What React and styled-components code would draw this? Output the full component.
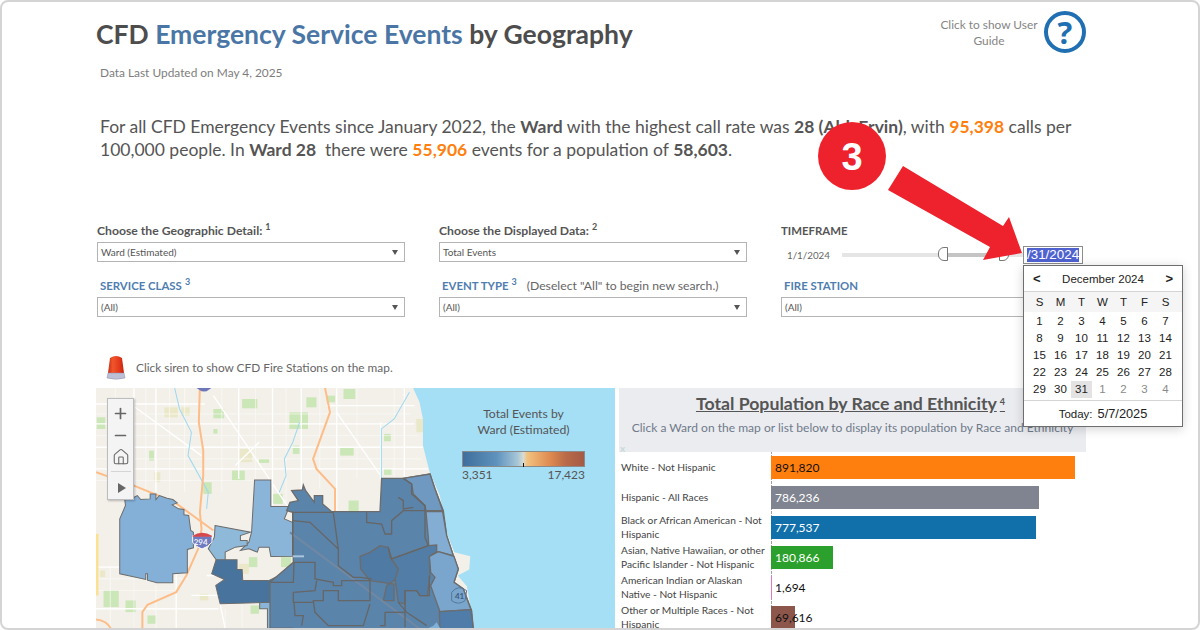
import React from 'react';
import styled, { createGlobalStyle } from 'styled-components';
import { Plus, Minus, Home } from 'lucide-react';

const GlobalStyle = createGlobalStyle`
  html, body { margin: 0; padding: 0; background: #fff; }
  * { box-sizing: border-box; }
`;

const Page = styled.div`
  position: relative;
  width: 1200px;
  height: 630px;
  overflow: hidden;
  background: #fff;
  border: 2px solid #d4d4d4;
  border-radius: 8px;
  padding: 0 112px 0 94px;
  font-family: Lato, "Open Sans", sans-serif;
  color: #555;
`;
const Header = styled.header`
  display: flex;
  justify-content: space-between;
  height: 62px;
  padding-top: 15px;
`;
const Title = styled.h1`
  margin: 0;
  font-size: 26.5px;
  line-height: 34px;
  font-weight: 700;
  color: #4d4d4d;
`;
const Blue = styled.span`
  color: #4a76a6;
`;
const Help = styled.div`
  display: flex;
  align-items: center;
  gap: 3px;
  height: 40px;
  margin-top: -5px;
`;
const HelpText = styled.div`
  width: 104px;
  padding-top: 2px;
  text-align: center;
  font-size: 11.9px;
  line-height: 16px;
  color: #858585;
`;
const HelpCircle = styled.div`
  width: 42px;
  height: 42px;
  border: 4px solid #1f6fb2;
  border-radius: 50%;
  display: flex;
  align-items: center;
  justify-content: center;
  color: #1f6fb2;
  font-family: "Open Sans", sans-serif;
  font-size: 31px;
  font-weight: 700;
`;
const Updated = styled.div`
  padding-left: 4px;
  font-size: 11.9px;
  line-height: 18px;
  color: #7d7d7d;
`;
const Summary = styled.p`
  margin: 33px 0 0 4px;
  width: 985px;
  font-size: 17.5px;
  line-height: 23px;
  color: #555;
`;
const Orange = styled.b`
  color: #ff7f0e;
`;
const Filters = styled.div`
  display: grid;
  grid-template-columns: 308px 308px 305px;
  column-gap: 34px;
  row-gap: 16px;
  margin: 62px 0 0 1px;
`;
const Filter = styled.div`
  display: flex;
  flex-direction: column;
`;
const FilterLabel = styled.div`
  height: 19px;
  line-height: 15px;
  padding-left: ${({ $inset }) => ($inset ? '3px' : '0')};
  font-size: ${({ $caps }) => ($caps ? '11.4px' : '12.2px')};
  font-weight: 700;
  color: ${({ $blue }) => ($blue ? '#4f7db0' : '#555')};
  white-space: nowrap;
`;
const Sup = styled.sup`
  font-size: 9px;
  line-height: 0;
  margin-left: 3px;
  vertical-align: 5px;
`;
const Note = styled.span`
  margin-left: 10px;
  font-size: 12.2px;
  font-weight: 400;
  color: #666;
`;
const Select = styled.div`
  position: relative;
  height: 20px;
  border: 1px solid #b4b4b4;
  padding-left: 3px;
  font-size: 10px;
  line-height: 18px;
  color: #555;
  &::after {
    content: '';
    position: absolute;
    right: 6px;
    top: 7px;
    border-left: 3.5px solid transparent;
    border-right: 3.5px solid transparent;
    border-top: 5px solid #555;
  }
`;
const SliderRow = styled.div`
  display: flex;
  align-items: center;
  height: 26px;
  margin-bottom: -6px;
`;
const SliderStart = styled.span`
  width: 61px;
  padding-left: 6px;
  font-size: 9.8px;
  color: #666;
`;
const Track = styled.div`
  position: relative;
  width: 181px;
  height: 4px;
  background: #e5e5e5;
`;
const TrackFill = styled.div`
  position: absolute;
  top: 0;
  bottom: 0;
  left: 100px;
  width: 60px;
  background: #c4c4c4;
`;
const Handle = styled.div`
  position: absolute;
  top: -6px;
  width: 10px;
  height: 14px;
  background: #fff;
  border: 1px solid #777;
  left: ${({ $right }) => ($right ? '157px' : '96px')};
  border-radius: ${({ $right }) => ($right ? '0 6px 6px 0' : '6px 0 0 6px')};
`;
const DateInput = styled.div`
  width: 60px;
  height: 18px;
  border: 1px solid #8c8c8c;
  padding: 1px 3px;
  font-family: "Liberation Sans", sans-serif;
  font-size: 13.4px;
  line-height: 14px;
  overflow: hidden;
  white-space: nowrap;
  background: #fff;
`;
const Selected = styled.span`
  display: inline-block;
  background: #4f62d0;
  color: #fff;
`;
const SirenRow = styled.div`
  display: flex;
  align-items: center;
  gap: 9px;
  height: 26px;
  margin: 37px 0 8px 9px;
  font-size: 11.85px;
  color: #666;
`;
const Board = styled.div`
  display: grid;
  grid-template-columns: 519px 467px;
  column-gap: 4px;
`;
const MapPane = styled.div`
  position: relative;
  height: 241px;
  overflow: hidden;
  background: #f3f0ea;
`;
const MapDrawing = styled.svg`
  display: block;
  width: 519px;
  height: 241px;
`;
const MapControls = styled.div`
  position: absolute;
  left: 11px;
  top: 10px;
  width: 27px;
  height: 102px;
  display: flex;
  flex-direction: column;
  align-items: center;
  padding-top: 4px;
  background: #f4f4f4;
  border: 1px solid #bdbdbd;
  box-shadow: 1px 1px 2px rgba(0, 0, 0, 0.25);
  color: #666;
`;
const ControlButton = styled.div`
  height: 22px;
  display: flex;
  align-items: center;
  justify-content: center;
`;
const ControlRule = styled.div`
  width: 20px;
  height: 1px;
  margin: 3px 0 5px;
  background: #d5d5d5;
`;
const PlayIcon = styled.div`
  margin-left: 2px;
  border-top: 5.5px solid transparent;
  border-bottom: 5.5px solid transparent;
  border-left: 8px solid #666;
`;
const Legend = styled.div`
  position: absolute;
  left: 366px;
  top: 18px;
  width: 123px;
  text-align: center;
  font-size: 12.2px;
  line-height: 16px;
  color: #555;
`;
const LegendBar = styled.div`
  position: relative;
  height: 16px;
  margin-top: 13px;
  border: 1px solid #8a8a8a;
  background: linear-gradient(90deg, #3f6f9c 0%, #5f92bd 28%, #a6c6d8 45%, #d9dcd2 50%, #f2c27e 53%, #df8a50 72%, #b96a48 85%, #a55a44 100%);
  &::after {
    content: '';
    position: absolute;
    left: 60px;
    bottom: -1px;
    width: 1px;
    height: 4px;
    background: #111;
  }
`;
const LegendScale = styled.div`
  display: flex;
  justify-content: space-between;
  font-size: 12px;
  line-height: 16px;
`;
const RacePanel = styled.section`
  min-width: 0;
`;
const RaceHead = styled.div`
  position: relative;
  height: 64px;
  padding-top: 4px;
  background: #ebecf0;
  text-align: center;
`;
const RaceTitle = styled.h2`
  margin: 0;
  padding-right: 4px;
  font-size: 17.7px;
  line-height: 24px;
  font-weight: 700;
  color: #555;
  text-decoration: underline;
`;
const RaceHint = styled.div`
  margin-top: 3px;
  font-size: 12.05px;
  line-height: 18px;
  color: #6f7a8a;
  white-space: nowrap;
`;
const Dismiss = styled.span`
  position: absolute;
  left: 1px;
  bottom: -1px;
  font-size: 10px;
  line-height: 10px;
  font-weight: 700;
  color: #c5d9da;
`;
const RaceRow = styled.div`
  display: grid;
  grid-template-columns: 152px 1fr;
  height: 30px;
`;
const RaceLabel = styled.div`
  display: flex;
  align-items: center;
  padding: 0 2px;
  font-size: 10.2px;
  line-height: 14px;
  color: #444;
`;
const BarCell = styled.div`
  position: relative;
  display: flex;
  align-items: center;
  border-left: 1px dotted #a0a0a0;
`;
const Bar = styled.div`
  height: 23px;
  margin-left: -1px;
  background: ${({ $color }) => $color};
`;
const BarValue = styled.span`
  position: absolute;
  left: 3px;
  font-size: 12px;
  color: ${({ $light }) => ($light ? '#fff' : '#111')};
`;
const Annotation = styled.svg`
  position: absolute;
  left: -2px;
  top: -2px;
  width: 1200px;
  height: 630px;
  pointer-events: none;
`;
const Calendar = styled.div`
  position: absolute;
  left: 1021px;
  top: 263px;
  width: 160px;
  height: 162px;
  background: #fff;
  border: 1px solid #6e6e6e;
  box-shadow: 0 2px 10px rgba(0, 0, 0, 0.18);
  font-family: "Liberation Sans", sans-serif;
  font-size: 11.5px;
  color: #222;
`;
const CalHead = styled.div`
  display: flex;
  align-items: center;
  justify-content: space-between;
  height: 26px;
  padding: 0 9px 0 9px;
  border-bottom: 1px solid #d4d4d4;
`;
const CalArrow = styled.span`
  font-size: 13px;
  font-weight: 700;
`;
const DayGrid = styled.div`
  display: grid;
  grid-template-columns: repeat(7, 21px);
  grid-auto-rows: 17px;
  padding: 0 5px;
  text-align: center;
  line-height: 17px;
`;
const WeekHead = styled(DayGrid)`
  grid-auto-rows: 20px;
  line-height: 20px;
  background: #f5f5f5;
  margin-bottom: 1px;
`;
const Day = styled.div`
  color: ${({ $muted }) => ($muted ? '#8a8a8a' : '#222')};
  background: ${({ $current }) => ($current ? '#e3e3e3' : 'transparent')};
`;
const CalFoot = styled.div`
  margin-top: 2px;
  height: 26px;
  border-top: 1px solid #d4d4d4;
  display: flex;
  align-items: center;
  justify-content: center;
  gap: 5px;
`;
const CalToday = styled.span`
  font-size: 12.8px;
`;

const races = [
  { label: 'White - Not Hispanic', value: '891,820', width: 304, color: '#ff7f0e' },
  { label: 'Hispanic - All Races', value: '786,236', width: 268, color: '#7f8490', light: true },
  { label: 'Black or African American - Not Hispanic', value: '777,537', width: 265, color: '#1170aa', light: true },
  { label: 'Asian, Native Hawaiian, or other Pacific Islander - Not Hispanic', value: '180,866', width: 62, color: '#2ca02c', light: true },
  { label: 'American Indian or Alaskan Native - Not Hispanic', value: '1,694', width: 1, color: '#e377c2' },
  { label: 'Other or Multiple Races - Not Hispanic', value: '69,616', width: 24, color: '#8c564b' },
];

const weeks = [
  [1, 2, 3, 4, 5, 6, 7],
  [8, 9, 10, 11, 12, 13, 14],
  [15, 16, 17, 18, 19, 20, 21],
  [22, 23, 24, 25, 26, 27, 28],
];

const greens = [
  [450, 60, 45, 28], [365, 90, 32, 28], [590, 100, 55, 50], [640, 55, 30, 30], [750, 30, 35, 30], [20, 115, 25, 35],
  [175, 215, 14, 30], [740, 205, 40, 25], [420, 275, 38, 30], [870, 165, 20, 22], [870, 270, 22, 18], [540, 345, 30, 30],
  [765, 365, 30, 35], [470, 535, 25, 30], [565, 535, 30, 30], [40, 635, 45, 50], [105, 665, 30, 35], [475, 680, 25, 25],
  [335, 310, 25, 35], [170, 710, 25, 25], [700, 50, 25, 20], [365, 150, 12, 14], [500, 240, 30, 12], [600, 200, 20, 25],
];
const tans = [
  [220, 85, 40, 30], [270, 85, 25, 25], [440, 210, 40, 40], [190, 280, 18, 30], [965, 120, 25, 40], [440, 555, 30, 30],
  [325, 645, 25, 20], [30, 575, 15, 20],
];
const whiteRoads = [
  'M18 135H960', 'M18 205H990', 'M18 270H1000', 'M130 25V360', 'M195 25V340', 'M440 25V300', 'M540 25V380', 'M625 25V330',
  'M730 25V400', 'M860 130V300', 'M930 25V300', 'M18 565H290', 'M345 590H440', 'M18 690H380', 'M255 520V750', 'M100 60L330 230',
  'M365 50L590 390', 'M730 100L860 290', 'M500 190L430 260', 'M18 75H340', 'M700 80H960', 'M300 650H380L400 750',
];
const thinRoads = [
  'M18 170H970', 'M18 240H980', 'M18 105H950', 'M18 305H480', 'M75 25V350', 'M165 25V345', 'M235 25V350', 'M280 25V340', 'M390 25V340',
  'M490 25V300', 'M580 25V370', 'M680 25V330', 'M790 25V300', 'M900 25V300', 'M18 635H250', 'M18 600H290', 'M60 560V750', 'M130 570V750',
  'M195 620V750', 'M400 690V750', 'M450 680V750',
];
const highways = [
  'M325 25L322 130L335 215L335 290L325 400L330 450L320 510L285 590L255 640L170 678L155 700V750',
  'M18 280L130 320L250 370L365 455',
  'M695 25L710 100L660 240L670 270L725 330V400',
  'M18 722Q50 725 62 750',
];
const rivers = [
  'M250 25L265 90L300 160L290 230L350 340L345 390',
  'M620 130L600 190L575 240L580 290L560 340',
  'M945 40L900 120L862 150V300',
];
const wardLines = [
  'M68 262V130H190',
  'M68 155L120 160L205 240V290L250 325H272L305 330',
  'M190 130L205 240',
  'M290 130V160L335 165L345 195H365V155L400 125H465',
  'M400 28L425 45V75L465 110V205L475 230',
  'M385 85L400 95V120L430 115',
  'M355 235L365 270L475 230',
  'M0 340H70L72 280H135V330L190 340V350H215V335H300V395H205V365H160V395H130L135 430L175 470H280L300 405',
  'M70 370V400H130',
  'M70 370L135 365L140 335',
  'M72 400L75 440H100L95 470',
  'M405 475V365L440 365L450 380H478V320',
  'M345 430H405',
  'M345 430V470H330',
  'M385 400L410 430L470 470',
  'M0 478H70',
];

const Siren = () => (
  <svg width="22" height="26" viewBox="0 0 22 26">
    <defs>
      <linearGradient id="dome" x1="0" x2="1" y1="0" y2="0">
        <stop offset="0" stopColor="#c92f18" />
        <stop offset="0.3" stopColor="#f2562a" />
        <stop offset="0.7" stopColor="#e23a1c" />
        <stop offset="1" stopColor="#c8220f" />
      </linearGradient>
    </defs>
    <path d="M3 19L5 4Q11 0 17 4L19 19Z" fill="url(#dome)" />
    <path d="M3 19H19L20 24Q11 26.5 2 24Z" fill="#bcbfd6" stroke="#8d90a8" strokeWidth="0.5" />
  </svg>
);

const CityMap = () => (
  <MapDrawing viewBox="96 389 519 241" preserveAspectRatio="none">
    <rect x="96" y="389" width="519" height="241" fill="#f3f0ea" />
    <g transform="translate(90 380) scale(.338 .333)" fill="none">
      {tans.map(([x, y, w, h]) => <rect key={`${x}-${y}`} x={x} y={y} width={w} height={h} fill="#ebe8c9" />)}
      {greens.map(([x, y, w, h]) => <rect key={`${x}-${y}`} x={x} y={y} width={w} height={h} fill="#cbe6b7" />)}
      {thinRoads.map(d => <path key={d} d={d} stroke="#fbfaf7" strokeWidth="2" />)}
      {whiteRoads.map(d => <path key={d} d={d} stroke="#fff" strokeWidth="4" />)}
      {rivers.map(d => <path key={d} d={d} stroke="#9ed8f0" strokeWidth="3" />)}
      {highways.map(d => <path key={d} d={d} stroke="#fdbd88" strokeWidth="6" />)}
      <rect x="18" y="465" width="7" height="185" fill="#fbe08f" />
      <path d="M312 25H362L345 37Q337 38 330 37Z" fill="#6c76b8" />
      <path d="M955 25L975 70L985 120L985 200L1005 280L1035 350L1045 400L1050 450L1078 520L1125 532L1122 572L1088 590L1115 622L1125 680L1135 750H1560V25Z" fill="#a5dff5" />
      <path d="M1085 548L1120 540L1118 566L1090 575Z" fill="#f3f0ea" />
      <path d="M487 303H535V383H590L575 420L602 432L606 532L535 533L530 505L500 505L495 520L470 510L445 515L470 490L478 460Z" fill="#8ab5d8" stroke="#6c6c6c" strokeWidth="3" />
      <path d="M370 440L475 460L445 470V485L465 485V500L430 505L400 520V545L375 545L350 510L368 475Z" fill="#8fb9d9" stroke="#6c6c6c" strokeWidth="3" />
      <path d="M88 420L105 380L102 355L125 358L140 350L150 362L178 360V345L195 345V362L205 350L228 358L245 362L258 372L243 378L262 390L278 392V408L292 410L298 455L306 460V507L288 512V582L245 585V612L198 612L170 604V585L165 585V602L88 585Z" fill="#84b0d8" stroke="#6c6c6c" strokeWidth="3" />
      <path d="M502 670H553V750H525V690H502Z" fill="#8ab5d8" stroke="#6c6c6c" strokeWidth="3" />
      <path d="M373 543H435V572H450L452 605H530L603 568L606 640L560 670L385 675L372 620L398 602L360 585Z" fill="#47739c" stroke="#6c6c6c" strokeWidth="3" />
    </g>
    <g transform="translate(270 470) scale(.3333)">
      <path d="M0 340L70 280L68 130L50 125L60 100L85 95L65 65L97 63L100 48L107 65L133 100V80H158V105L185 128H330L335 28H400L480 15L495 60L520 125L530 200L550 260L565 300L552 340L580 360L605 425L610 480H0Z" fill="#5b84ab" stroke="#6c6c6c" strokeWidth="4" />
      <path d="M400 28L480 15L495 60L518 125H468L465 110L430 75L425 45Z" fill="#7099c2" stroke="#6c6c6c" strokeWidth="4" />
      <path d="M468 128H518L530 200L550 260L505 248L478 262L475 205Z" fill="#83add3" stroke="#6c6c6c" strokeWidth="4" />
      <path d="M478 262L505 248L552 262L565 300L552 340L580 360L603 422L510 428L482 350L495 325L482 310Z" fill="#7aa5cd" stroke="#6c6c6c" strokeWidth="4" />
      <path d="M508 428L603 422L610 480H510Z" fill="#4f7ca8" stroke="#6c6c6c" strokeWidth="4" />
      <path d="M270 262L300 250L330 230L355 235L360 265L385 300L378 330L350 350L340 395H372V345L300 335L272 300Z" fill="#4f7aa3" stroke="#6c6c6c" strokeWidth="4" />
      <path d="M365 270L475 230L500 228L500 248L478 262L480 320L472 380L450 380L440 365L405 365V405L385 400L375 330L385 300Z" fill="#527da6" stroke="#6c6c6c" strokeWidth="4" />
      <path d="M60 190L450 480" stroke="#7088a2" strokeWidth="6" fill="none" />
      <path d="M490 470L500 460L512 480H470Z" fill="#7fb0d5" />
      {wardLines.map(d => <path key={d} d={d} stroke="#666" strokeWidth="4" fill="none" />)}
      <path d="M68 262H102" stroke="#a9c6dc" strokeWidth="6" />
      <path d="M545 370Q565 345 590 365L585 395Q565 410 545 395Z" fill="none" stroke="#54789a" strokeWidth="3" />
      <text x="555" y="390" fontSize="24" fontWeight="700" fontFamily="Lato, sans-serif" fill="#3e5f80">41</text>
    </g>
    <g transform="translate(96 385) scale(.3333)">
      <path d="M290 455H348V475Q335 490 318 495Q300 490 290 475Z" fill="#6f7bc0" stroke="#fff" strokeWidth="3" />
      <path d="M290 455Q318 438 348 455V458H290Z" fill="#d6484c" />
      <text x="293" y="482" fontSize="24" fontWeight="700" fontFamily="Lato, sans-serif" fill="#f0f0f8">294</text>
    </g>
  </MapDrawing>
);

export default function App() {
  return (
    <Page>
      <GlobalStyle />
      <Header>
        <Title>CFD <Blue>Emergency Service Events</Blue> by Geography</Title>
        <Help>
          <HelpText>Click to show User Guide</HelpText>
          <HelpCircle>?</HelpCircle>
        </Help>
      </Header>
      <Updated>Data Last Updated on May 4, 2025</Updated>
      <Summary>
        For all CFD Emergency Events since January 2022, the <b>Ward</b> with the highest call rate was <b>28 (Ald. Ervin)</b>, with <Orange>95,398</Orange> calls per 100,000 people. In <b>Ward 28</b>&nbsp; there were <Orange>55,906</Orange> events for a population of <b>58,603</b>.
      </Summary>

      <Filters>
        <Filter>
          <FilterLabel>Choose the Geographic Detail:<Sup>1</Sup></FilterLabel>
          <Select>Ward (Estimated)</Select>
        </Filter>
        <Filter>
          <FilterLabel>Choose the Displayed Data:<Sup>2</Sup></FilterLabel>
          <Select>Total Events</Select>
        </Filter>
        <Filter>
          <FilterLabel $caps>TIMEFRAME</FilterLabel>
          <SliderRow>
            <SliderStart>1/1/2024</SliderStart>
            <Track>
              <TrackFill />
              <Handle />
              <Handle $right />
            </Track>
            <DateInput><Selected>/31/2024</Selected></DateInput>
          </SliderRow>
        </Filter>
        <Filter>
          <FilterLabel $caps $blue $inset>SERVICE CLASS<Sup>3</Sup></FilterLabel>
          <Select>(All)</Select>
        </Filter>
        <Filter>
          <FilterLabel $caps $blue $inset>EVENT TYPE<Sup>3</Sup><Note>(Deselect "All" to begin new search.)</Note></FilterLabel>
          <Select>(All)</Select>
        </Filter>
        <Filter>
          <FilterLabel $caps $blue $inset>FIRE STATION</FilterLabel>
          <Select>(All)</Select>
        </Filter>
      </Filters>

      <SirenRow>
        <Siren />
        Click siren to show CFD Fire Stations on the map.
      </SirenRow>

      <Board>
        <MapPane>
          <CityMap />
          <MapControls>
            <ControlButton><Plus size={17} strokeWidth={2.4} /></ControlButton>
            <ControlButton><Minus size={17} strokeWidth={2.4} /></ControlButton>
            <ControlButton><Home size={18} strokeWidth={1.4} /></ControlButton>
            <ControlRule />
            <ControlButton><PlayIcon /></ControlButton>
          </MapControls>
          <Legend>
            Total Events by<br />Ward (Estimated)
            <LegendBar />
            <LegendScale><span>3,351</span><span>17,423</span></LegendScale>
          </Legend>
        </MapPane>
        <RacePanel>
          <RaceHead>
            <RaceTitle>Total Population by Race and Ethnicity<Sup>4</Sup></RaceTitle>
            <RaceHint>Click a Ward on the map or list below to display its population by Race and Ethnicity</RaceHint>
            <Dismiss>x</Dismiss>
          </RaceHead>
          {races.map(r => (
            <RaceRow key={r.label}>
              <RaceLabel>{r.label}</RaceLabel>
              <BarCell>
                <Bar $color={r.color} style={{ width: r.width }} />
                <BarValue $light={r.light}>{r.value}</BarValue>
              </BarCell>
            </RaceRow>
          ))}
        </RacePanel>
      </Board>

      <Annotation viewBox="0 0 1200 630">
        <circle cx="852" cy="156" r="34" fill="#ee222d" />
        <text x="852" y="170" textAnchor="middle" fontFamily="'Liberation Sans', sans-serif" fontSize="38" fontWeight="700" fill="#fff">3</text>
        <path d="M903 166L1003 226L1009 217L1022 253L983 260L990 247L888 190Z" fill="#ee222d" />
      </Annotation>

      <Calendar>
        <CalHead>
          <CalArrow>&lt;</CalArrow>
          <span>December 2024</span>
          <CalArrow>&gt;</CalArrow>
        </CalHead>
        <WeekHead>
          {['S', 'M', 'T', 'W', 'T', 'F', 'S'].map((d, i) => <Day key={i}>{d}</Day>)}
        </WeekHead>
        {weeks.map(w => (
          <DayGrid key={w[0]}>
            {w.map(d => <Day key={d}>{d}</Day>)}
          </DayGrid>
        ))}
        <DayGrid>
          <Day>29</Day>
          <Day>30</Day>
          <Day $current>31</Day>
          {[1, 2, 3, 4].map(d => <Day key={d} $muted>{d}</Day>)}
        </DayGrid>
        <CalFoot><span>Today:</span><CalToday>5/7/2025</CalToday></CalFoot>
      </Calendar>
    </Page>
  );
}
